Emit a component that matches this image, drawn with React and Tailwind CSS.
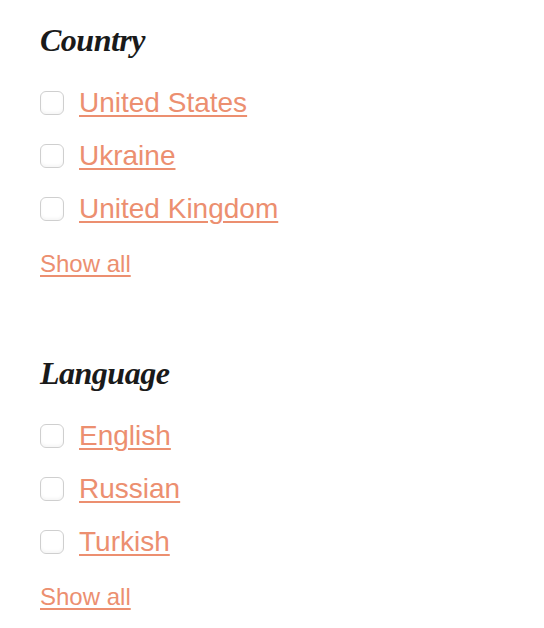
const sections = [
  { title: "Country", items: ["United States", "Ukraine", "United Kingdom"] },
  { title: "Language", items: ["English", "Russian", "Turkish"] },
];

function FilterGroup({ title, items }) {
  return (
    <div className="flex flex-col">
      <h3 className="h-[32px] text-[32px] leading-[32px] italic font-bold tracking-[-0.5px] text-[#1a1a1a] font-['Liberation_Serif',serif]">
        {title}
      </h3>
      <ul className="mt-[20px] flex flex-col">
        {items.map((item) => (
          <li key={item} className="h-[53px] flex items-center gap-[15px]">
            <span className="w-[24px] h-[24px] rounded-[6px] border border-[#cfcfcf] bg-white shadow-[inset_0_-2px_3px_rgba(0,0,0,0.04)] shrink-0" />
            <a href="#" className="text-[28px] leading-none text-[#ec8f70] underline decoration-2 underline-offset-[3px]">
              {item}
            </a>
          </li>
        ))}
      </ul>
      <a href="#" className="mt-[17px] h-[24px] text-[24px] leading-[24px] text-[#ec8f70] underline decoration-2 underline-offset-[3px] self-start">
        Show all
      </a>
    </div>
  );
}

export default function App() {
  return (
    <div className="w-[544px] h-[628px] bg-white pl-[40px] pt-[24px] font-['Liberation_Sans',Arial,sans-serif]">
      <div className="flex flex-col gap-[81px]">
        {sections.map((s) => (
          <FilterGroup key={s.title} {...s} />
        ))}
      </div>
    </div>
  );
}
